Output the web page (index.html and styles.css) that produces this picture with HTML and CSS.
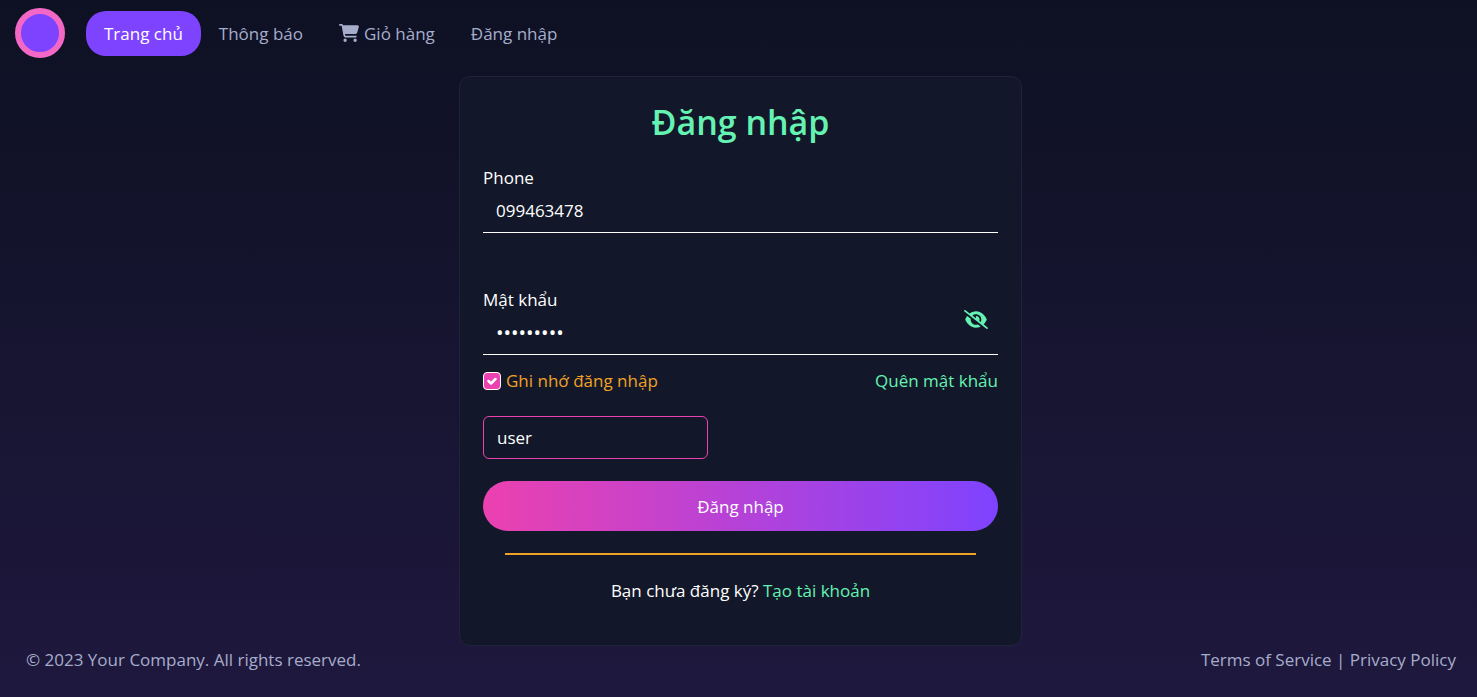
FILE: index.html
```html
<!DOCTYPE html>
<html lang="vi">
<head>
<meta charset="utf-8">
<meta name="viewport" content="width=device-width, initial-scale=1">
<title>Đăng nhập</title>
<link rel="stylesheet" href="styles.css">
</head>
<body class="page">
<header class="topbar">
  <a class="logo" href="#" aria-label="Trang chủ"></a>
  <nav class="nav">
    <a class="nav-link active" href="#">Trang chủ</a>
    <a class="nav-link" href="#">Thông báo</a>
    <a class="nav-link" href="#"><svg class="cart" viewBox="0 0 576 512" aria-hidden="true"><path d="M0 24C0 10.7 10.7 0 24 0H69.5c22 0 41.5 12.8 50.6 32h411c26.3 0 45.5 25 38.6 50.4l-41 152.3c-8.5 31.4-37 53.3-69.5 53.3H170.7l5.4 28.5c2.2 11.3 12.1 19.5 23.6 19.5H488c13.3 0 24 10.7 24 24s-10.7 24-24 24H199.7c-34.6 0-64.3-24.6-70.7-58.5L77.4 54.5c-.7-3.8-4-6.5-7.9-6.5H24C10.7 48 0 37.3 0 24zM128 464a48 48 0 1 1 96 0 48 48 0 1 1 -96 0zm336-48a48 48 0 1 1 0 96 48 48 0 1 1 0-96z"/></svg>Giỏ hàng</a>
    <a class="nav-link" href="#">Đăng nhập</a>
  </nav>
</header>
<main class="main">
  <form class="card">
    <h1 class="title">Đăng nhập</h1>
    <div class="field">
      <label for="phone">Phone</label>
      <input class="line-input" id="phone" type="text" value="099463478">
    </div>
    <div class="field">
      <label for="password">Mật khẩu</label>
      <input class="line-input password" id="password" type="password" value="123456789">
      <button class="toggle" type="button" aria-label="Hiện mật khẩu"><svg class="eye" viewBox="0 0 640 512" aria-hidden="true"><path d="M38.8 5.1C28.4-3.1 13.3-1.2 5.1 9.2S-1.2 34.7 9.2 42.9l592 464c10.4 8.2 25.5 6.3 33.7-4.1s6.3-25.5-4.1-33.7L525.6 386.7c39.6-40.6 66.4-86.1 79.9-118.4c3.3-7.9 3.3-16.7 0-24.6c-14.9-35.7-46.2-87.7-93-131.1C465.5 68.8 400.8 32 320 32c-68.2 0-125 26.3-169.3 60.8L38.8 5.1zM223.1 149.5C248.6 126.2 282.7 112 320 112c79.5 0 144 64.5 144 144c0 24.9-6.3 48.3-17.4 68.7L408 294.5c8.4-19.3 10.6-41.4 4.8-63.3c-11.1-41.5-47.8-69.4-88.6-71.1c-5.8-.2-9.2 6.1-7.4 11.7c2.1 6.4 3.3 13.2 3.3 20.3c0 10.2-2.4 19.8-6.6 28.3l-90.3-70.8zM373 389.9c-16.4 6.5-34.3 10.1-53 10.1c-79.5 0-144-64.5-144-144c0-6.9 .5-13.6 1.4-20.2L83.1 161.5C60.3 191.2 44 220.8 34.5 243.7c-3.3 7.9-3.3 16.7 0 24.6c14.9 35.7 46.2 87.7 93 131.1C174.5 443.2 239.2 480 320 480c47.8 0 89.9-12.9 126.2-32.5L373 389.9z"/></svg></button>
    </div>
    <div class="options">
      <label class="remember"><input class="check" type="checkbox" checked>Ghi nhớ đăng nhập</label>
      <a class="accent" href="#">Quên mật khẩu</a>
    </div>
    <input class="role" type="text" value="user" aria-label="Vai trò">
    <button class="submit" type="submit">Đăng nhập</button>
    <hr class="rule">
    <p class="signup">Bạn chưa đăng ký? <a class="accent" href="#">Tạo tài khoản</a></p>
  </form>
</main>
<footer class="footer">
  <span>© 2023 Your Company. All rights reserved.</span>
  <span><a href="#">Terms of Service</a> | <a href="#">Privacy Policy</a></span>
</footer>
</body>
</html>
```
FILE: styles.css
```css
* {
  box-sizing: border-box;
}

.page {
  display: flex;
  flex-direction: column;
  min-height: 100vh;
  margin: 0;
  background: linear-gradient(#0e1123, #1f183e);
  color: #fff;
  font: 17px/27px "Segoe UI", "Open Sans", "Noto Sans", sans-serif;
}

a {
  color: inherit;
  text-decoration: none;
}

.topbar {
  display: flex;
  align-items: center;
  gap: 21px;
  padding: 8px 15px 7px;
}

.logo {
  width: 50px;
  height: 50px;
  border: 6px solid #f368c4;
  border-radius: 50%;
  background: #7e43ff;
}

.nav {
  display: flex;
  color: #a6adcb;
}

.nav-link {
  padding: 9px 18px;
  border-radius: 20px;
}

.nav-link.active {
  background: #7e43ff;
  color: #fff;
}

.cart {
  width: 20px;
  height: 18px;
  margin-right: 5px;
  vertical-align: -2px;
  fill: currentColor;
}

.main {
  display: flex;
  justify-content: center;
  padding: 11px 0 0 4px;
}

.card {
  width: 100%;
  max-width: 563px;
  padding: 21px 23px 41px;
  border: 1px solid #20223a;
  border-radius: 11px;
  background: #121829;
}

.title {
  margin: 0 0 18px;
  color: #65f3b3;
  font-size: 34px;
  line-height: 48px;
  font-weight: 600;
  text-align: center;
}

.field {
  position: relative;
  display: flex;
  flex-direction: column;
}

.field + .field {
  margin-top: 53px;
}

input,
button {
  font: inherit;
  color: inherit;
}

.line-input {
  height: 42px;
  padding: 0 13px 2px;
  border: 0;
  border-bottom: 1px solid #fff;
  background: transparent;
}

.password {
  font-size: 20px;
}

.toggle {
  position: absolute;
  top: 24px;
  right: 10px;
  display: flex;
  padding: 0;
  border: 0;
  background: none;
  color: #65f3b3;
}

.eye {
  width: 24px;
  height: 19px;
  fill: currentColor;
}

.options {
  display: flex;
  justify-content: space-between;
  margin: 12px 0 22px;
}

.remember {
  display: flex;
  align-items: center;
  gap: 5px;
  color: #f1a126;
}

.check {
  appearance: none;
  width: 18px;
  height: 18px;
  margin: 0;
  border: 1px solid #fff;
  border-radius: 4px;
  background: #ec41b0 url("data:image/svg+xml,%3Csvg xmlns='http://www.w3.org/2000/svg' viewBox='0 0 16 16'%3E%3Cpath fill='none' stroke='%23fff' stroke-width='2.5' stroke-linecap='round' stroke-linejoin='round' d='m4.5 8 2.5 2.5 4.5-4.5'/%3E%3C/svg%3E") center / contain no-repeat;
}

.accent {
  color: #65f3b3;
}

.role {
  display: block;
  width: 225px;
  height: 43px;
  padding: 0 13px;
  border: 1px solid #ec41b0;
  border-radius: 6px;
  background: transparent;
}

.submit {
  display: block;
  width: 100%;
  height: 50px;
  margin-top: 22px;
  border: 0;
  border-radius: 25px;
  background: linear-gradient(90deg, #ec41b0, #7e43ff);
}

.rule {
  height: 2px;
  margin: 22px;
  border: 0;
  background: #f1a126;
}

.signup {
  margin: 0;
  text-align: center;
}

.footer {
  display: flex;
  justify-content: space-between;
  padding: 0 21px 22px 26px;
  color: #a6adcb;
}
```
